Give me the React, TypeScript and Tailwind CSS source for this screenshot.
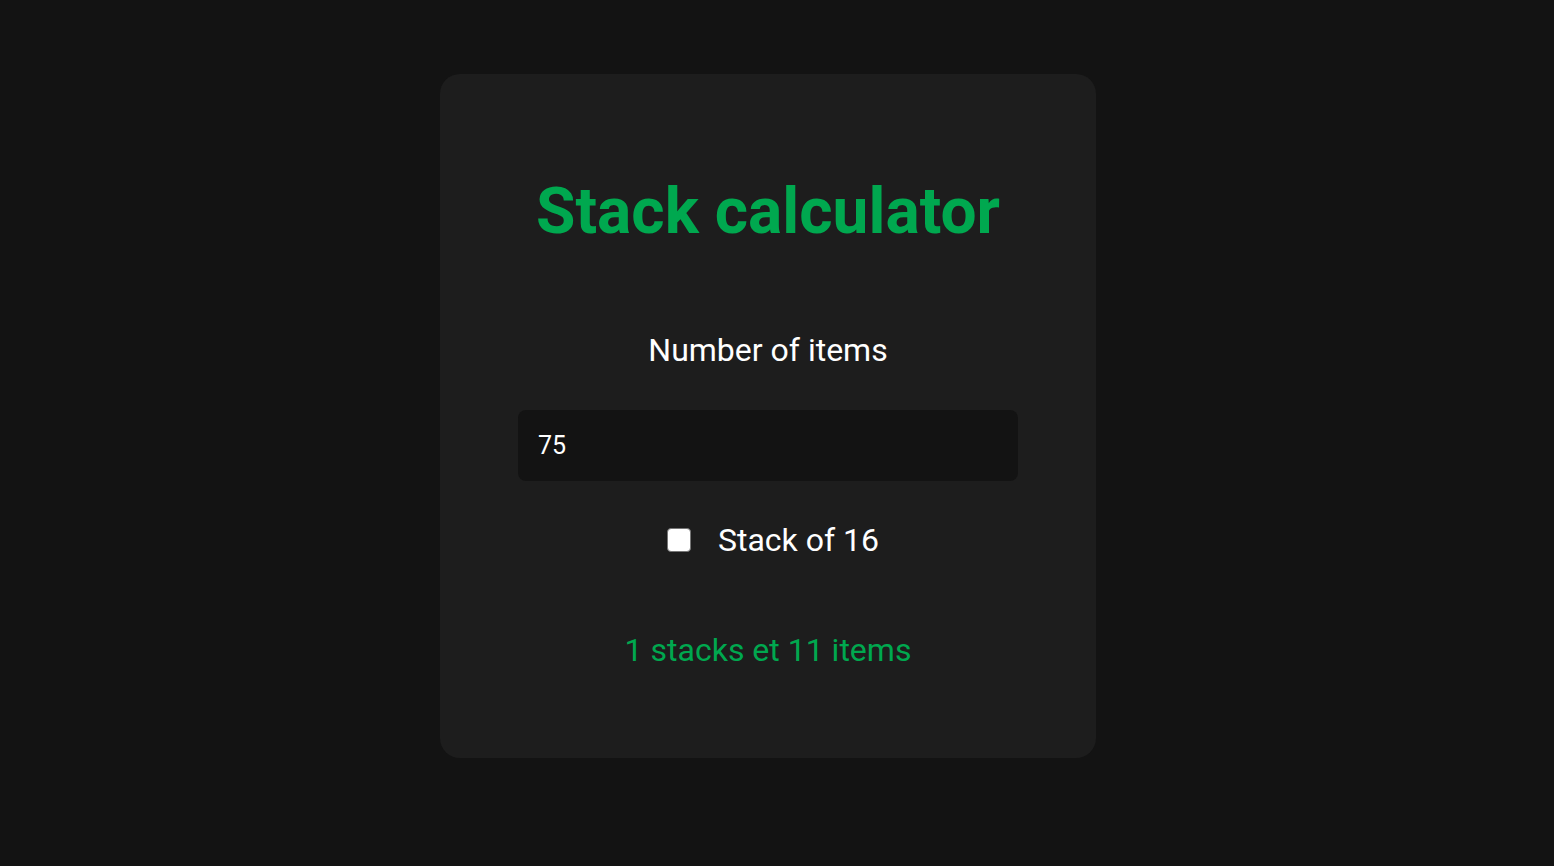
import React from "react";

export default function App() {
  return (
    <div
      className="min-h-screen w-full bg-[#131313] flex justify-center pt-[74px] pr-[18px]"
      style={{ fontFamily: "Roboto, 'Noto Sans', sans-serif" }}
    >
      <div className="w-[656px] h-[684px] bg-[#1d1d1d] rounded-[20px] flex flex-col items-center">
        <h1 className="mt-[100px] text-[64px] leading-[76px] font-bold text-[#00a84f]">
          Stack calculator
        </h1>
        <div className="mt-[81px] text-[32px] leading-[38px] text-white">Number of items</div>
        <div className="mt-[41px] w-[500px] h-[71px] rounded-[8px] bg-[#131313] flex items-center px-[20px] text-[25px] text-white">
          75
        </div>
        <label className="mt-[39px] pl-[10px] flex items-center gap-[27px] text-[32px] leading-[40px] text-white">
          <span className="w-[24px] h-[24px] rounded-[4px] bg-white border-[1.5px] border-[#767676]" />
          Stack of 16
        </label>
        <div className="mt-[70px] text-[32px] leading-[40px] text-[#00a84f]">1 stacks et 11 items</div>
      </div>
    </div>
  );
}
